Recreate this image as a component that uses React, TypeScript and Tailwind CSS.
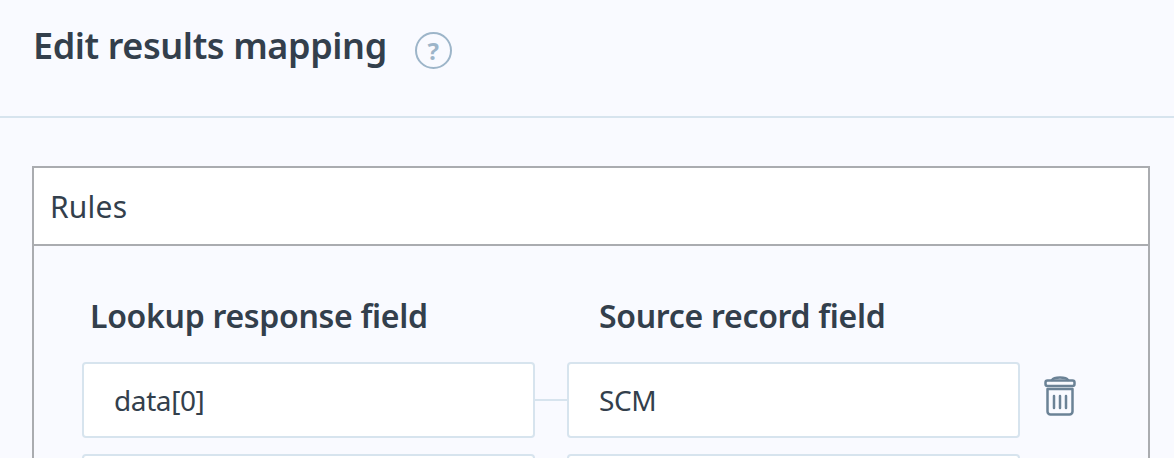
export default function App() {
  return (
    <div className="h-[458px] overflow-hidden bg-[#f9faff] font-['Noto_Sans',sans-serif] text-[#333f4c]">
      {/* Header */}
      <div className="flex h-[118px] items-start border-b-2 border-[#d7e4ee] pl-[33px] pt-[23px]">
        <h1 className="text-[36px] leading-[46px] font-semibold tracking-[-0.4px]">Edit results mapping</h1>
        <div className="mt-[9px] ml-[28px] flex h-[37px] w-[37px] items-center justify-center rounded-full border-2 border-[#9db5c9] text-[24px] leading-none font-bold text-[#9db5c9]">?</div>
      </div>

      {/* Rules panel */}
      <div className="mr-[24px] ml-[32px] mt-[48px] border-2 border-[#aaacb0]">
        <div className="flex h-[78px] items-center border-b-2 border-[#aaacb0] bg-white pl-[16px] text-[30px] tracking-[0.2px]">Rules</div>
        <div className="px-[48px] pt-[45px]">
          <div className="flex text-[32px] leading-[50px] font-semibold tracking-[-0.3px]">
            <div className="w-[517px] pl-[8px]">Lookup response field</div>
            <div>Source record field</div>
          </div>
          <div className="mt-[21px] flex flex-col gap-[16px]">
            <Row left="data[0]" right="SCM" trash />
            <Row left="" right="" />
          </div>
        </div>
      </div>
    </div>
  );
}

function Row({ left, right, trash }: { left: string; right: string; trash?: boolean }) {
  return (
    <div className="flex items-start">
      <Field value={left} />
      <div className="mt-[37px] h-[2px] w-[32px] bg-[#d7e4ee]"></div>
      <Field value={right} />
      {trash && (
        <svg className="mt-[14px] ml-[24px]" width="32" height="40" viewBox="0 0 32 40" fill="none" stroke="#6b8296" strokeWidth="2.500" strokeLinejoin="round" strokeLinecap="round">
          <rect x="1.500" y="4.500" width="29" height="5.500" rx="2" />
          <path d="M8 4c2-3.500 14-3.500 16 0" />
          <path d="M3.500 13h25v22.500a3 3 0 0 1-3 3h-19a3 3 0 0 1-3-3z" />
          <path d="M10 20v12M16 20v12M22 20v12" />
        </svg>
      )}
    </div>
  );
}

function Field({ value }: { value: string }) {
  return (
    <div className="flex h-[76px] w-[453px] items-center rounded-[4px] border-2 border-[#d7e4ee] bg-white pl-[30px] text-[28px] tracking-[-0.4px]">
      {value}
    </div>
  );
}
